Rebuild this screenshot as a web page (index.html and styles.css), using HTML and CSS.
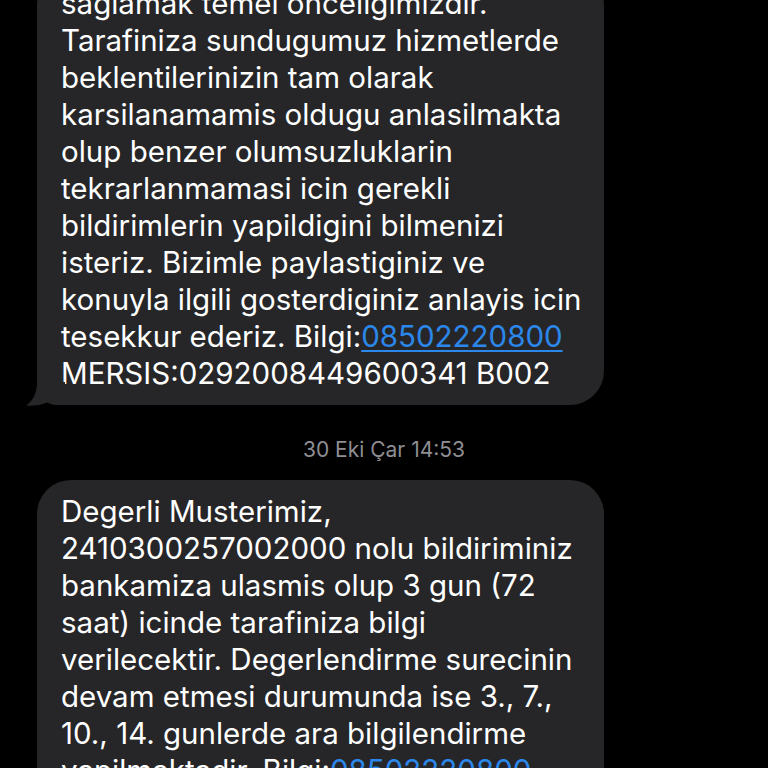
FILE: index.html
```html
<!DOCTYPE html>
<html lang="tr">
<head>
<meta charset="utf-8">
<link rel="stylesheet" href="styles.css">
</head>
<body>
<div class="thread">
  <div class="bubble first">
    <span class="line">saglamak temel onceligimizdir.</span>
    <span class="line">Tarafiniza sundugumuz hizmetlerde</span>
    <span class="line">beklentilerinizin tam olarak</span>
    <span class="line">karsilanamamis oldugu anlasilmakta</span>
    <span class="line">olup benzer olumsuzluklarin</span>
    <span class="line">tekrarlanmamasi icin gerekli</span>
    <span class="line">bildirimlerin yapildigini bilmenizi</span>
    <span class="line">isteriz. Bizimle paylastiginiz ve</span>
    <span class="line">konuyla ilgili gosterdiginiz anlayis icin</span>
    <span class="line">tesekkur ederiz. Bilgi:<a class="link">08502220800</a></span>
    <span class="line">MERSIS:0292008449600341 B002</span>
    <svg class="tail" width="40" height="24" viewBox="0 0 40 24"><path d="M12 0 C12 11 8 19 1 23.5 C11 24.5 22 22 30 16 L40 16 L40 0 Z" fill="#262628"/></svg>
  </div>
  <div class="stamp">30 Eki Çar 14:53</div>
  <div class="bubble">
    <span class="line">Degerli Musterimiz,</span>
    <span class="line">2410300257002000 nolu bildiriminiz</span>
    <span class="line">bankamiza ulasmis olup 3 gun (72</span>
    <span class="line">saat) icinde tarafiniza bilgi</span>
    <span class="line">verilecektir. Degerlendirme surecinin</span>
    <span class="line">devam etmesi durumunda ise 3., 7.,</span>
    <span class="line">10., 14. gunlerde ara bilgilendirme</span>
    <span class="line">yapilmaktadir. Bilgi:<a class="link">08502220800</a></span>
  </div>
</div>
</body>
</html>
```
FILE: styles.css
```css
html, body {
  margin: 0;
  padding: 0;
  background: #000;
  height: 768px;
  overflow: hidden;
}
.thread {
  display: flex;
  flex-direction: column;
  align-items: flex-start;
  padding-left: 37px;
  margin-top: -28px;
  font-family: Inter, "Noto Sans", sans-serif;
}
.bubble {
  position: relative;
  box-sizing: border-box;
  width: 567px;
  background: #262628;
  border-radius: 34px;
  padding: 13px 0 13px 24px;
  color: #fff;
  font-size: 29.5px;
  line-height: 37px;
  display: flex;
  flex-direction: column;
}
.first {
  border-bottom-left-radius: 20px;
}
.line {
  white-space: nowrap;
}
.link {
  color: #2b87ea;
  text-decoration: underline;
  text-decoration-thickness: 2px;
  text-underline-offset: 3px;
}
.tail {
  position: absolute;
  left: -12px;
  bottom: -1px;
}
.stamp {
  align-self: stretch;
  margin-left: -37px;
  text-align: center;
  color: #8e8e93;
  font-size: 21px;
  line-height: 26px;
  padding: 32px 0 17px;
}
```
